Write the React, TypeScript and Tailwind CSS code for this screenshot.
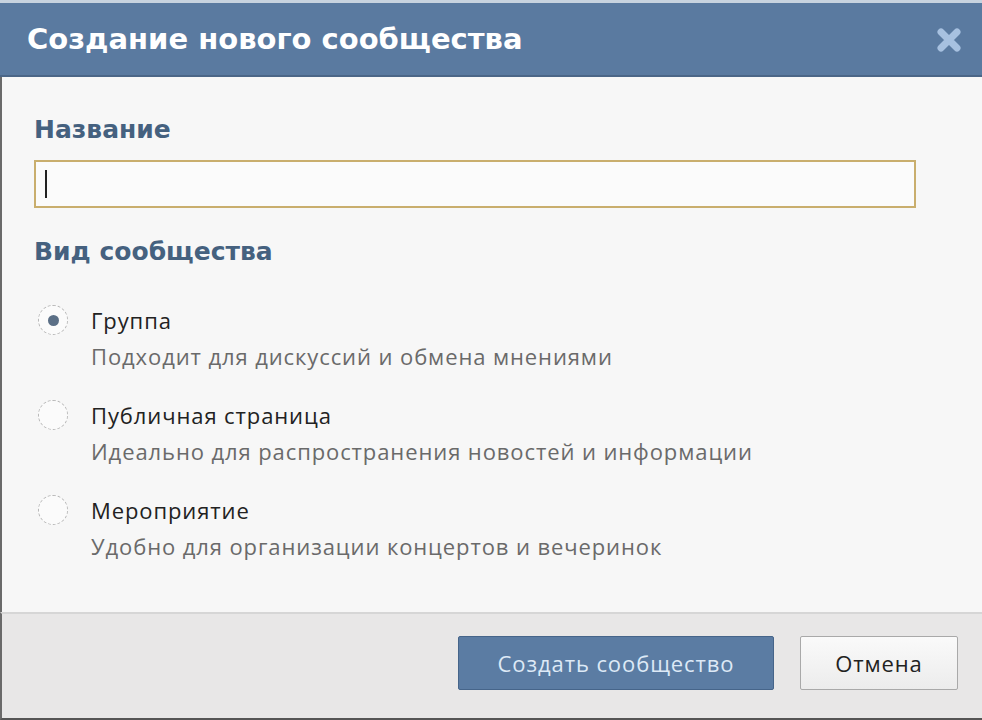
import React from "react";

const options = [
  { title: "Группа", desc: "Подходит для дискуссий и обмена мнениями", checked: true },
  { title: "Публичная страница", desc: "Идеально для распространения новостей и информации", checked: false },
  { title: "Мероприятие", desc: "Удобно для организации концертов и вечеринок", checked: false },
];

function Radio({ checked }: { checked: boolean }) {
  return (
    <div className="w-[30px] h-[30px] shrink-0 rounded-full border border-dashed border-[#b8b8b8] bg-[#fbfbfb] flex items-center justify-center">
      {checked && <div className="w-[11px] h-[11px] rounded-full bg-[#5b6f86]" />}
    </div>
  );
}

export default function App() {
  return (
    <div
      className="w-[982px] h-[720px] flex flex-col overflow-hidden bg-[#f7f7f7]"
      style={{ fontFamily: "'DejaVu Sans', sans-serif" }}
    >
      <div className="h-[3px] bg-[#c7d3df]" />
      <div className="h-[74px] bg-[#5a7aa0] border-b-2 border-[#4b6687] flex items-center justify-between pl-[27px] pr-[20px]">
        <div className="text-[29px] font-bold text-white mt-[2px]">Создание нового сообщества</div>
        <svg width="26" height="26" viewBox="0 0 26 26" className="mt-[2px]">
          <path d="M5 5 L21 21 M21 5 L5 21" stroke="#a7c1e0" strokeWidth="7" strokeLinecap="round" />
        </svg>
      </div>
      <div className="flex-1 border-l-2 border-[#6a6a6a] pl-[32px] pr-[66px] flex flex-col">
        <div className="mt-[39px] h-[28px] leading-[28px] text-[25px] font-bold text-[#45617f]">Название</div>
        <div className="mt-[16px] h-[48px] border-2 border-[#c9ae6d] bg-[#fbfbfb] flex items-center pl-[9px]">
          <div className="w-[2px] h-[28px] bg-[#222]" />
        </div>
        <div className="mt-[30px] h-[28px] leading-[28px] text-[25px] font-bold text-[#45617f]">Вид сообщества</div>
        <div className="mt-[41px] flex flex-col gap-[34px]">
          {options.map((o) => (
            <div key={o.title} className="flex items-start">
              <div className="ml-[4px] mt-[-2px]">
                <Radio checked={o.checked} />
              </div>
              <div className="ml-[23px] tracking-[0.9px]" style={{ fontFamily: "'Open Sans', sans-serif" }}>
                <div className="h-[26px] leading-[26px] text-[22px] text-[#222]">{o.title}</div>
                <div className="mt-[11px] h-[24px] leading-[24px] text-[22px] text-[#6a6a6a]">{o.desc}</div>
              </div>
            </div>
          ))}
        </div>
      </div>
      <div className="h-[108px] border-t-2 border-[#d6d6d6] border-l-2 border-l-[#6a6a6a] border-b-2 border-b-[#555] bg-[#e8e7e7] flex items-start justify-end pt-[22px] pr-[24px] gap-[26px] tracking-[0.9px]"
        style={{ fontFamily: "'Open Sans', sans-serif" }}>
        <div className="w-[316px] h-[54px] bg-[#5b7ca3] border border-[#46658a] rounded-[2px] flex items-center justify-center text-[22px] text-[#dde9f6]">
          Создать сообщество
        </div>
        <div className="w-[158px] h-[54px] bg-gradient-to-b from-[#fafafa] to-[#ececec] border border-[#a9a9a9] rounded-[2px] flex items-center justify-center text-[22px] text-[#222]">
          Отмена
        </div>
      </div>
    </div>
  );
}
